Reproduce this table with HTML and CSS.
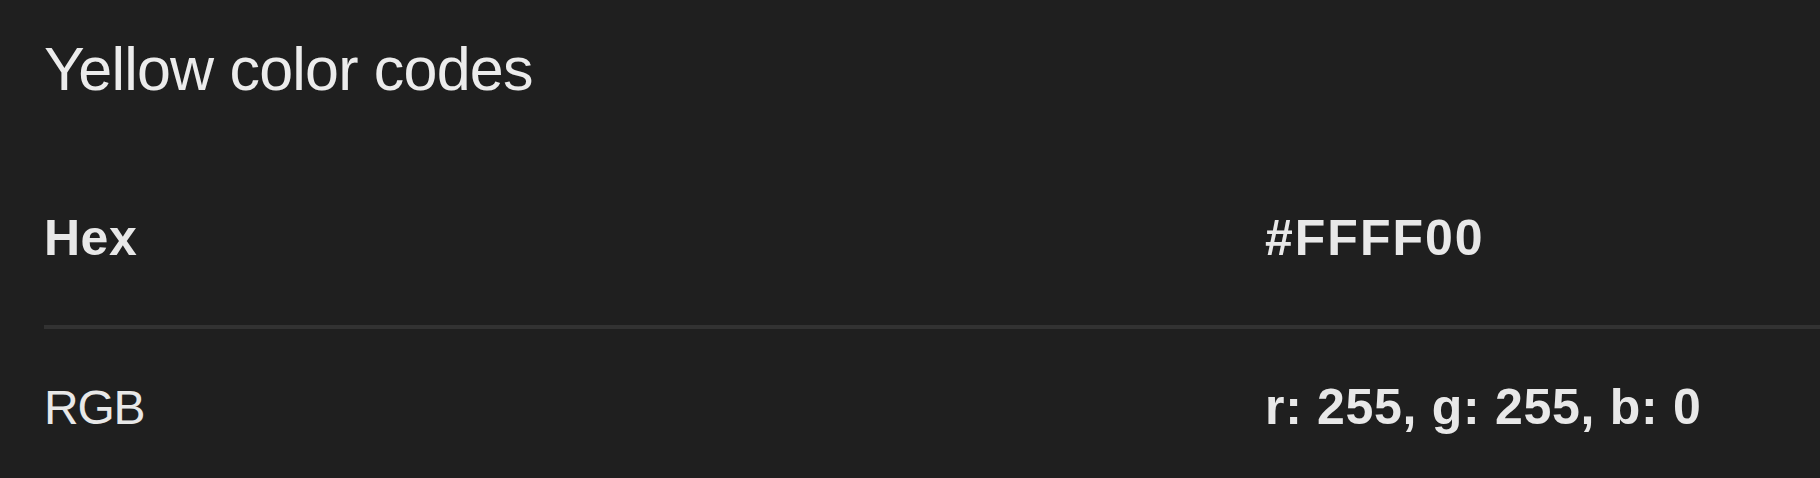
FILE: index.html
```html
<!DOCTYPE html>
<html lang="en">
<head>
<meta charset="utf-8">
<title>Yellow color codes</title>
<link rel="stylesheet" href="styles.css">
</head>
<body>
<section class="codes">
  <h2 class="codes-title">Yellow color codes</h2>
  <div class="codes-table">
    <div class="codes-row codes-row--first">
      <div class="codes-label codes-label--bold">Hex</div>
      <div class="codes-value codes-value--hex">#FFFF00</div>
    </div>
    <div class="codes-row">
      <div class="codes-label">RGB</div>
      <div class="codes-value">r: 255, g: 255, b: 0</div>
    </div>
  </div>
</section>
</body>
</html>
```
FILE: styles.css
```css
html, body {
  margin: 0;
  padding: 0;
  background: #1f1f1f;
  height: 100%;
  overflow: hidden;
}

body {
  font-family: "Liberation Sans", Arial, sans-serif;
  color: #e8e8e8;
}

.codes {
  padding: 39px 0 0 44px;
}

.codes-title {
  margin: 0;
  font-size: 61px;
  line-height: 61px;
  font-weight: 400;
  letter-spacing: -0.8px;
  color: #ececec;
}

.codes-table {
  margin-top: 60px;
}

.codes-row {
  display: grid;
  grid-template-columns: 1221px 1fr;
  align-items: baseline;
  padding: 53px 0 62px;
  line-height: 50px;
}

.codes-row--first {
  border-bottom: 4px solid #323232;
}

.codes-label {
  font-size: 48px;
  font-weight: 400;
  letter-spacing: -1.2px;
}

.codes-label--bold {
  font-size: 50px;
  font-weight: 700;
  letter-spacing: 0.5px;
}

.codes-value {
  font-size: 50px;
  font-weight: 700;
  letter-spacing: 0.7px;
}

.codes-value--hex {
  letter-spacing: 2px;
}
```
